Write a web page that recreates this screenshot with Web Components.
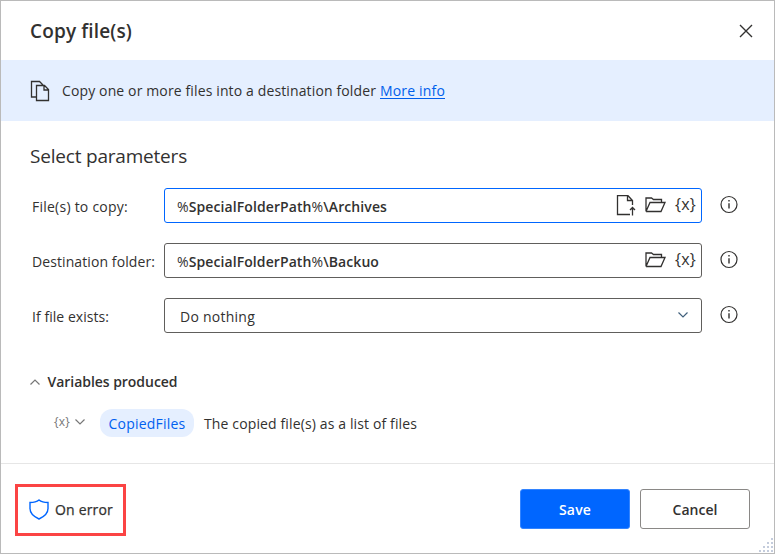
<!DOCTYPE html>
<html lang="en"><head><meta charset="utf-8"><title>Copy file(s)</title>
<style>body{margin:0;background:#fff;font-family:"Open Sans","Noto Sans",sans-serif;font-size:14px;line-height:20px;color:#323130}</style>
</head><body><action-dialog></action-dialog>
<script>
const define=(name,html,ready)=>customElements.define(name,class extends HTMLElement{
  connectedCallback(){
    if(this.shadowRoot)return;
    this.attachShadow({mode:'open'}).innerHTML=html;
    if(ready)ready(this,this.shadowRoot);
  }
});

// Text that spreads its letters evenly over the width given in "w".
define('ui-text',`<style>:host{display:block;white-space:pre;flex:none}span{display:inline-block}::slotted(i){font-style:normal;font-weight:400}</style><span><slot></slot></span>`,(el,root)=>{
  const w=+el.getAttribute('w'),s=root.querySelector('span');
  el.style.width=w+'px';
  s.style.letterSpacing=((w-s.getBoundingClientRect().width)/el.textContent.length)+'px';
});

const icons={
  copy:[20,22,'<path d="M6 17H1.500V1.500H9.500L13 5M6.500 5.500H14.500L18.500 9.500V20.500H6.500Z M14 5.500V10H18.500" stroke-width="1.300"/>'],
  close:[14,14,'<path d="M1 1 13 13M13 1 1 13" stroke-width="1.35"/>'],
  upload:[20,21,'<path d="M14 19.500H1.500V.7H12L16.500 5.500V10M11.500 1V5.500H16.500M16.500 20.500V12.500M14 15 16.500 12.500 19 15" stroke-width="1.300"/>'],
  folder:[21,16,'<path d="M1 14.500V1H6.500L8.500 2.500H16.500V5.500M1 14.500 5 5.500H20L16 14.500H1" stroke-width="1.300"/>'],
  info:[18,18,'<circle cx="9" cy="8.500" r="8"/><path d="M9 7.300V12.500M9 4V5.500" stroke-width="1.400"/>'],
  down:[12,8,'<path d="M1.500 1.500 6 6 10.500 1.500"/>'],
  up:[12,8,'<path d="M1.500 6.500 6 2 10.500 6.500"/>'],
  shield:[20,21,'<path d="M10 1C7.500 3 4.500 3.500 1 3.500V9.500C1 14 4.500 17.500 10 20C15.500 17.500 19 14 19 9.500V3.500C15.500 3.500 12.500 3 10 1Z" stroke-width="1.400"/>'],
  grip:[15,15,'<g fill="currentColor" stroke="none"><path d="M12 0h2v2h-2zM8 4h2v2H8zM12 4h2v2h-2zM4 8h2v2H4zM8 8h2v2H8zM12 8h2v2h-2zM0 12h2v2H0zM4 12h2v2H4zM8 12h2v2H8zM12 12h2v2h-2z"/></g>']
};
define('ui-icon',`<style>:host{display:block;flex:none}svg{display:block;overflow:visible;fill:none;stroke:currentColor;stroke-width:1.2}</style>`,(el,root)=>{
  const [w,h,p]=icons[el.getAttribute('name')];
  root.innerHTML+=`<svg width="${w}" height="${h}" viewBox="0 0 ${w} ${h}">${p}</svg>`;
});

define('param-row',`<style>
:host{display:grid;grid-template-columns:132px 538px 18px;height:35px;align-items:center;--edge:#605e5c}
:host([active]){--edge:#0066ff}
.label{padding-top:3px}
.box{height:35px;box-sizing:border-box;border:1px solid var(--edge);border-radius:3px;display:flex;align-items:center;justify-content:space-between;padding:2px 5px 0 12px}
.tools{display:flex;align-items:center;gap:9px;margin-top:-3px}
ui-icon.info{margin:-2px 0 0 18px}
</style><div class="label"><slot name="label"></slot></div><div class="box"><slot></slot><div class="tools"><slot name="tools"></slot></div></div><ui-icon class="info" name="info"></ui-icon>`);

define('ui-button',`<style>
:host{display:flex;box-sizing:border-box;width:110px;height:40px;border:1px solid #8a8886;border-radius:3px;align-items:center;justify-content:center;font-weight:600;padding-top:1px}
:host([primary]){background:#0066ff;border-color:#3384ff;color:#fff}
</style><slot></slot>`);

define('ui-pill',`<style>:host{display:flex;box-sizing:border-box;width:94px;height:28px;border-radius:12px;background:#e5efff;color:#0060f0;align-items:center;justify-content:center;padding-top:1px}</style><slot></slot>`);

define('action-dialog',`<style>
:host{display:grid;grid-template-rows:59px 61px 342px 1px 1fr;box-sizing:border-box;width:775px;height:554px;border:1px solid #bababa;position:relative}
header{display:flex;justify-content:space-between;align-items:center;padding:0 21.5px 0 29px;font-size:19px;font-weight:600}
header ui-text{padding-top:1px}
.banner{background:#e5efff;display:flex;align-items:center;padding-left:29px}
.banner ui-icon{margin-right:12px}
a{color:#005fec;display:block;height:17px;line-height:20px;border-bottom:1px solid;margin:-1px 0 0 4px}
main{padding:25px 29px 0 29px}
h2{font-size:19px;line-height:20px;font-weight:400;margin:0 0 22px}
.rows{display:grid;gap:20px;padding-left:2px}
.value{font-weight:600}
.brace{font-size:16px;line-height:20px;margin-top:-2px}
.section{display:flex;align-items:center;gap:6.5px;margin:39px 0 0 -1px;font-weight:600}
.section ui-icon,.var>ui-icon{color:#777}
.produced{display:flex;align-items:center;margin-top:17px;padding-left:24px}
.var{display:flex;align-items:center;gap:4px;width:46px;color:#777}
.var .brace{font-size:12px;margin-top:-2px}
.var ui-icon{margin-top:-2px}
.produced>ui-text{margin:1px 0 0 10px}
.line{background:#e6e6e6}
footer{display:flex;align-items:flex-start;justify-content:space-between;padding:20px 24px 0 14px}
.error{display:flex;box-sizing:border-box;width:111px;height:52px;border:3px solid #fb4444;align-items:center;padding-left:11px;gap:6px;-webkit-text-stroke:.25px}
.error ui-icon{color:#0066ff;margin-top:-2px}
.buttons{display:flex;gap:10px;margin-top:5px}
.grip{position:absolute;right:0;bottom:0;color:#c4ccdc}
</style>
<header><ui-text w="102">Copy file(s)</ui-text><ui-icon name="close"></ui-icon></header>
<section class="banner"><ui-icon name="copy"></ui-icon><ui-text w="314">Copy one or more files into a destination folder</ui-text><a><ui-text w="65">More info</ui-text></a></section>
<main>
<h2><ui-text w="157">Select parameters</ui-text></h2>
<div class="rows">
<param-row active><ui-text slot="label" w="96">File(s) to copy:</ui-text><ui-text class="value" w="210"><i>%</i>SpecialFolderPath<i>%</i>\\Archives</ui-text><ui-icon slot="tools" name="upload"></ui-icon><ui-icon slot="tools" name="folder"></ui-icon><ui-text slot="tools" class="brace" w="21">{x}</ui-text></param-row>
<param-row><ui-text slot="label" w="123">Destination folder:</ui-text><ui-text class="value" w="202"><i>%</i>SpecialFolderPath<i>%</i>\\Backuo</ui-text><ui-icon slot="tools" name="folder"></ui-icon><ui-text slot="tools" class="brace" w="21">{x}</ui-text></param-row>
<param-row><ui-text slot="label" w="77">If file exists:</ui-text><ui-text w="75" style="margin-left:3px">Do nothing</ui-text><ui-icon slot="tools" name="down" style="margin-right:7px;color:#41607c"></ui-icon></param-row>
</div>
<div class="section"><ui-icon name="up"></ui-icon><ui-text w="130">Variables produced</ui-text></div>
<div class="produced"><div class="var"><ui-text class="brace" w="16">{x}</ui-text><ui-icon name="down"></ui-icon></div><ui-pill><ui-text w="77">CopiedFiles</ui-text></ui-pill><ui-text w="213">The copied file(s) as a list of files</ui-text></div>
</main>
<div class="line"></div>
<footer><div class="error"><ui-icon name="shield"></ui-icon><ui-text w="58">On error</ui-text></div>
<div class="buttons"><ui-button primary><ui-text w="32">Save</ui-text></ui-button><ui-button><ui-text w="45">Cancel</ui-text></ui-button></div></footer>
<ui-icon class="grip" name="grip"></ui-icon>`);
</script></body></html>
